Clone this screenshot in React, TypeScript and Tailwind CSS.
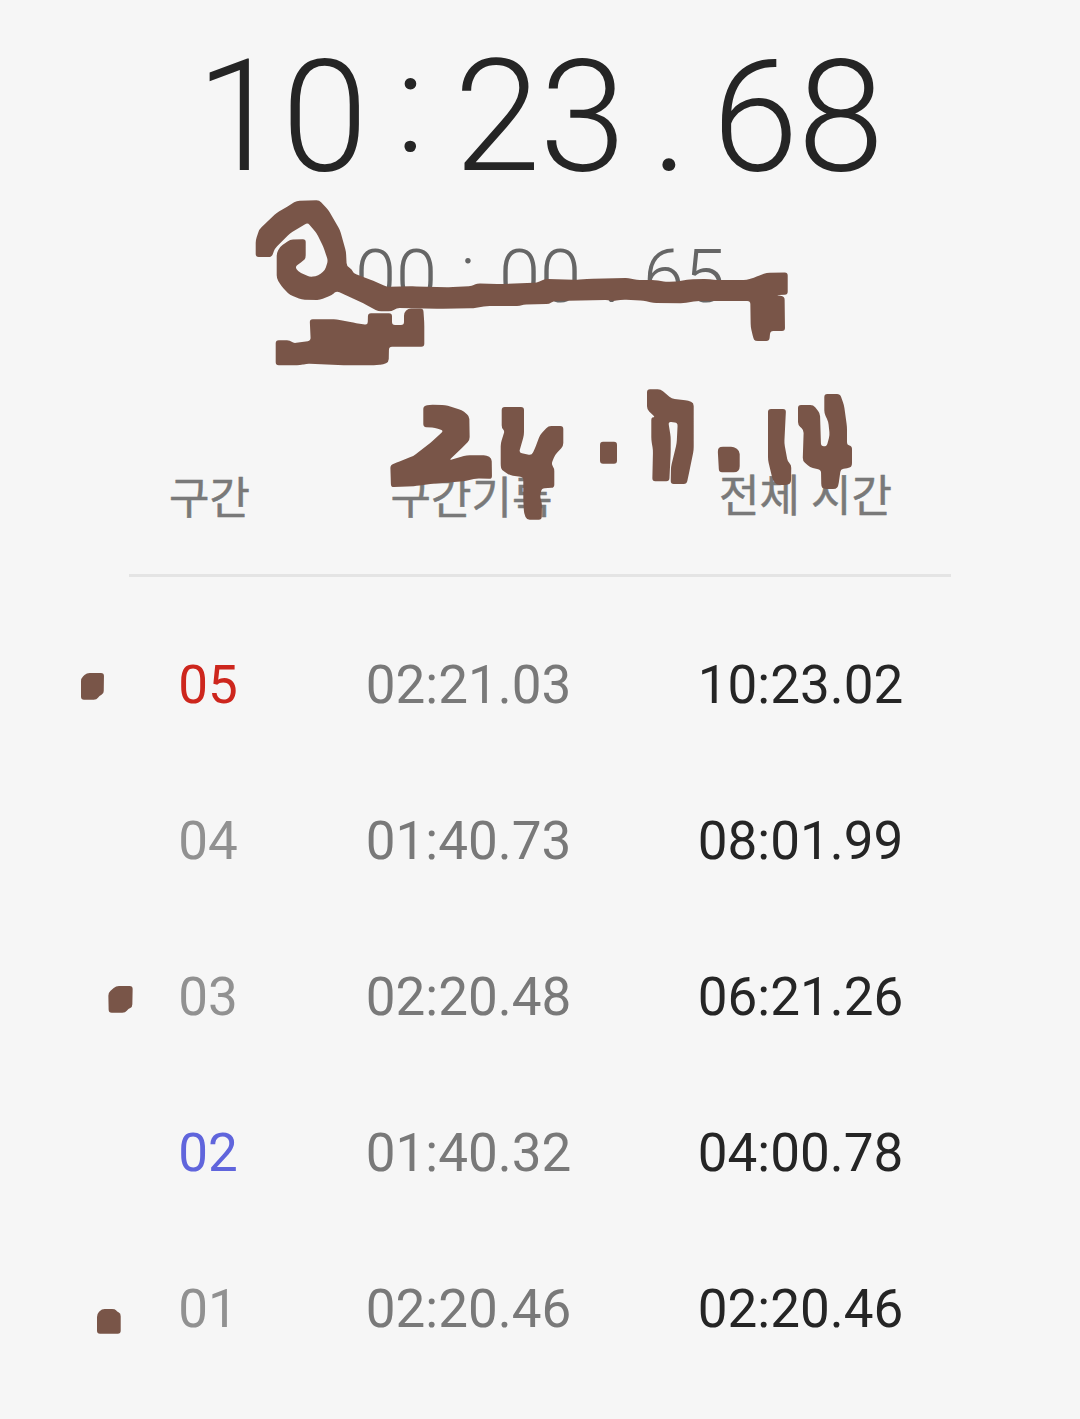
type Lap = {
  no: string;
  split: string;
  total: string;
  color: string;
};

const laps: Lap[] = [
  { no: "05", split: "02:21.03", total: "10:23.02", color: "text-[#cd261d]" },
  { no: "04", split: "01:40.73", total: "08:01.99", color: "text-[#919191]" },
  { no: "03", split: "02:20.48", total: "06:21.26", color: "text-[#919191]" },
  { no: "02", split: "01:40.32", total: "04:00.78", color: "text-[#6065dc]" },
  { no: "01", split: "02:20.46", total: "02:20.46", color: "text-[#919191]" },
];

// Freehand ink laid over the screen, one closed outline per pen shape
const ink = [
  "255.7 240,259.3 229.3,276.7 212.7,285 208,296.7 200.7,319.3 200.3,328.3 210,340 230,346 251.7,346.7 266,352 269.3,353.3 273.3,373.3 280.7,386.7 286.7,413.3 286.3,450 287.3,471.7 286,477.3 283.3,500 284,536.7 282.7,545 279,576.7 279.7,590 278.7,628.3 278,636.7 280,655 280,666.7 282,678.3 281.3,690 279.3,706.7 279,716.7 280,746.7 280,756.7 276.7,766.7 272.7,787.7 272.4,787.7 294.7,776 295,784.6 296.7,785 331,770.3 331,769.3 341,755 341,753.3 338.3,750.7 326.7,750.3 301,696.7 301,683.3 303.3,653.3 303,643.3 300.7,623.3 299.7,613.3 301,608 300,553.3 301,549.3 304,523.3 304.7,520 306,486.7 306,473.3 308.3,440 308.7,396.7 308,391.7 311.3,378.3 311.3,363.3 303.3,336.7 291,331.7 295,320 300,301.7 299.7,290 295,281.7 286.7,276.7 278.3,276.7 253.3,280 246.7,290 239.7,305.7 239,305.7 258.3,303.3 260.7,295 266.7,298.3 271.7,310 277,318.3 275.7,325 270,328 260.7,323.3 246.7,316.7 233.3,307.7 222.7,290 233.3,275 248.3,271.7 257,255.7 257",
  "275.7 340.3,290 340.3,293.3 343.3,310.7 340.7,309.7 319.3,336.7 319.3,353.3 322.7,367.7 325,368 313.3,392 313.3,392 325,404 325,404 312.7,408.3 308.3,423.3 308.7,424.3 323.3,424.3 346.7,389 346.7,388.7 362,383.3 364.3,376.7 365.3,346.7 365.3,306.7 363.7,300 365.3,275.7 365.3",
  "423.3 406,430 404.7,445 405,461.7 410,469.3 416,469.7 440,463.3 446.7,449 460.3,466.7 455.3,486.7 455.3,491.7 458.3,492 479,476.7 478.3,463.3 481.3,433.3 483.7,416.7 486,391 487.2,390.3 465,396.7 462.7,413.3 456,430 443.3,443.7 430.7,435 427.7,423.3 427",
  "501.7 407,524 407,524 435,519 452.7,531.7 455.3,535 448.3,540 435,548.3 426,563.3 426,563.3 446,555 455,551.3 464,554.3 468.3,554.3 487.7,541.7 488.3,540 496.7,542 503.3,541.7 519.7,526.7 519.7,524 513.3,523.3 500,523.3 477.3,510 475.3,501.7 470,500.7 466.7,500.7 443.3,504.7 430.7,501.7 428.3",
  "600 441.7,617 441.7,617 463.7,600 463.7",
  "647 389.3,660.7 389.3,671.7 398.7,688.3 400.7,693.7 403,693.7 450,690 468.3,686.7 484,670.7 484,671 466.7,676.7 443.3,677.7 423,668.3 421.7,670.7 436.7,670.7 453,669.3 481.3,652.3 481.3,653 450,651.3 440,651.3 417.3,655.3 417.3,647 409.3",
  "717.7 449.3,720 446.7,734 446.7,739.7 451,739.7 469.3,736.7 472.3,719 472.3",
  "768 409,786 409,784.3 443.3,787.7 461.7,791.3 465,791 482.7,788.3 485,776.7 485,772.7 480,768 460",
  "798 405,813.3 405,820 413.3,821 446.3,826.7 446.3,829.7 435,828.3 421.7,824.3 413.3,824.3 394,840 394,844 405,847 426.7,847 445,852 446,852 466,850 467.7,840.7 469.3,838.3 486,836 489,823.3 489,821.3 486.7,821 470,810 467.3,802.7 460.7,803.7 430,798 425",
  "81 678.3,86.7 673,104 673,103.7 694,99.3 695.7,96.7 699.7,81 699.7",
  "108.3 992.7,116 986,132.7 986,132.3 1007.3,128.3 1008.7,125.3 1012.7,108.7 1012.7",
  "97 1314,101.7 1309,115 1309,117 1311.7,120.7 1313.3,120.7 1333.7,97 1333.7",
];

// Turns an outline into a path whose corners are softened like a felt pen's
function softPath(outline: string, radius = 3) {
  const pts = outline.split(",").map((p) => p.split(" ").map(Number));
  const toward = (a: number[], b: number[]) => {
    const len = Math.hypot(b[0] - a[0], b[1] - a[1]);
    const t = Math.min(0.5, radius / len);
    return `${a[0] + (b[0] - a[0]) * t} ${a[1] + (b[1] - a[1]) * t}`;
  };
  const corners = pts.map((p, i) => {
    const prev = pts[(i + pts.length - 1) % pts.length];
    const next = pts[(i + 1) % pts.length];
    return `${toward(p, prev)}Q${p[0]} ${p[1]} ${toward(p, next)}`;
  });
  return `M${corners.join("L")}Z`;
}

function InkOverlay() {
  return (
    <svg
      className="pointer-events-none absolute inset-0 fill-[#795548]"
      width="1080"
      height="1419"
      viewBox="0 0 1080 1419"
      aria-hidden="true"
    >
      {ink.map((outline) => (
        <path key={outline} d={softPath(outline)} />
      ))}
    </svg>
  );
}

export default function App() {
  return (
    <div className="relative flex h-[1419px] w-[1080px] flex-col overflow-hidden bg-[#f6f6f6] font-['Roboto','Noto_Sans_CJK_KR',sans-serif] text-[#252525]">
      {/* Total time */}
      <div className="mt-[37px] ml-[197px] grid h-40 grid-cols-[170px_87px_171px_87px_171px] text-center text-[156px] leading-[160px] font-light tracking-[-1px] whitespace-nowrap">
        <span className="-ml-px">10</span>
        <span className="-mt-3.5 -ml-px text-[140px]">:</span>
        <span>23</span>
        <span className="pl-0.5">.</span>
        <span>68</span>
      </div>

      {/* Current lap */}
      <div className="mt-10 ml-[354px] grid h-20 grid-cols-[84px_60px_84px_60px_84px] text-center text-[74px] leading-[80px] font-light whitespace-nowrap text-[#666666]">
        <span>00</span>
        <span className="-mt-1.5 text-[66px]">:</span>
        <span>00</span>
        <span>.</span>
        <span>65</span>
      </div>

      {/* Lap table */}
      <div className="mx-[129px] mt-[150px] grid h-[110px] grid-cols-[158px_363px_301px] border-b-3 border-[#e4e4e4] text-center text-[44px] leading-[64px] text-[#797979] [-webkit-text-stroke:0.5px_#797979]">
        <span className="pl-[3px]">구간</span>
        <span className="pl-1.5">구간기록</span>
        <span className="-mt-0.5 pl-2.5">전체 시간</span>
      </div>

      <div className="mx-[129px] mt-[30px] flex flex-col">
        {laps.map((lap) => (
          <div
            key={lap.no}
            className="grid h-[156px] grid-cols-[158px_363px_301px] text-center text-[53px] leading-[156px]"
          >
            <span className={lap.color}>{lap.no}</span>
            <span className="text-[#797979]">{lap.split}</span>
            <span>{lap.total}</span>
          </div>
        ))}
      </div>

      <InkOverlay />
    </div>
  );
}
